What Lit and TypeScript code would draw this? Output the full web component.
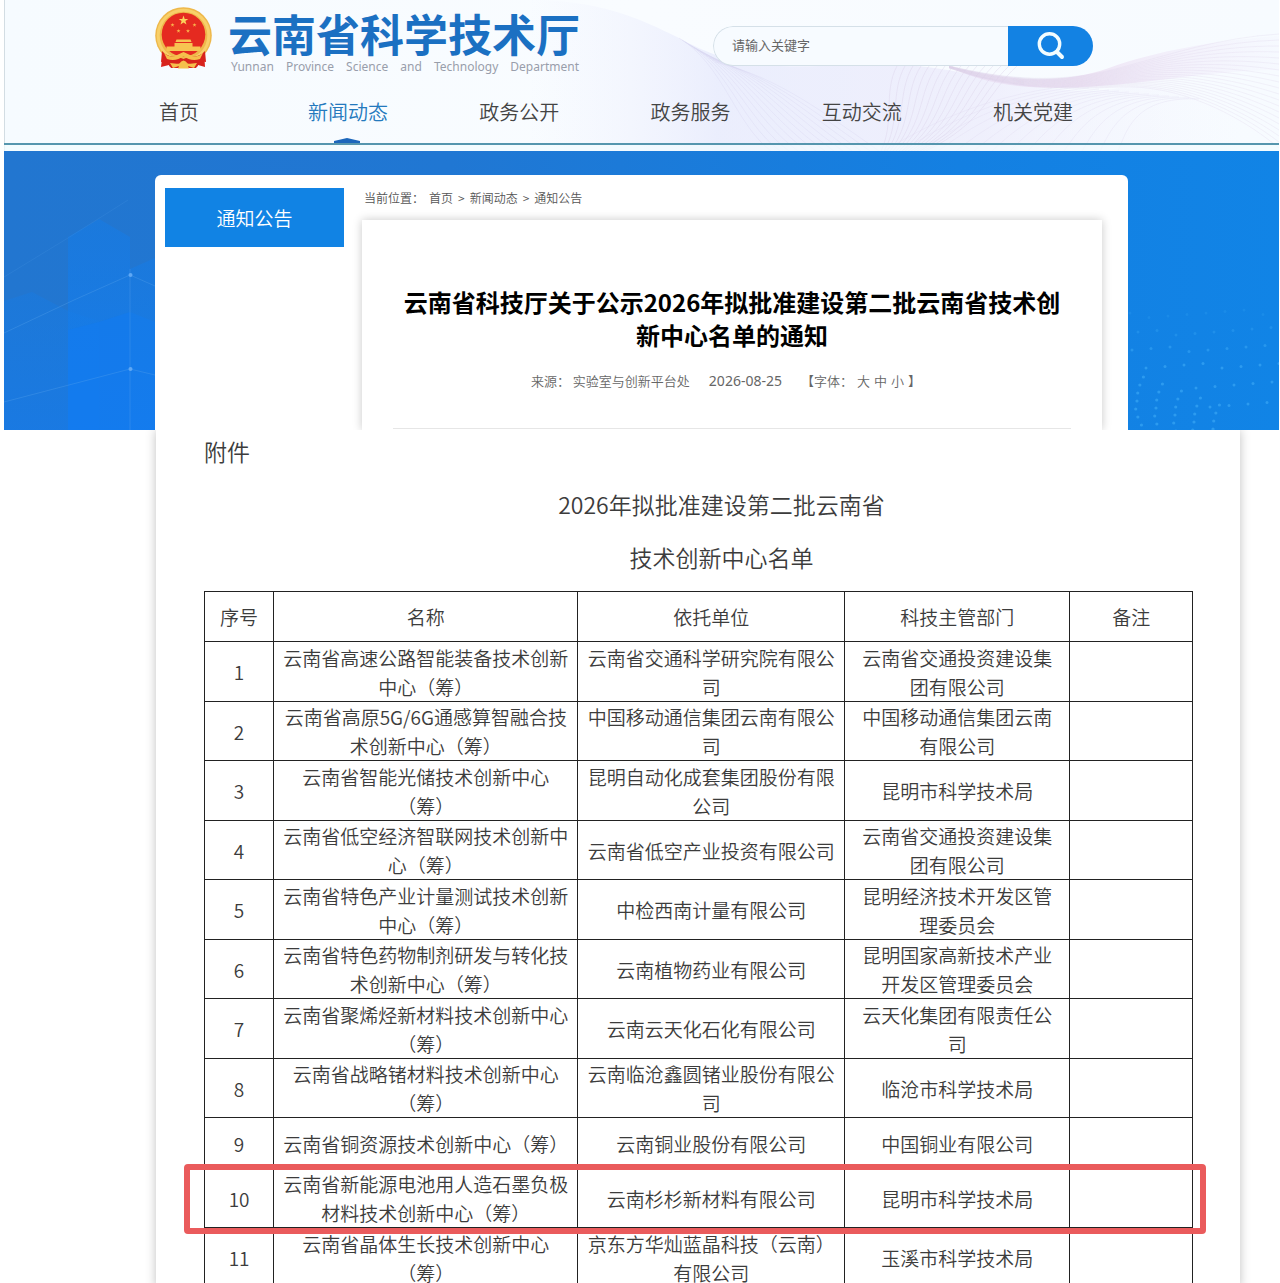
import { LitElement, html, svg, css } from "lit";
import { customElement, state } from "lit/decorators.js";

interface CenterRow {
  name: string;
  host: string;
  dept: string;
  marked?: boolean;
}

const NAV = ["首页", "新闻动态", "政务公开", "政务服务", "互动交流", "机关党建"];

const ROWS: CenterRow[] = [
  { name: "云南省高速公路智能装备技术创新中心（筹）", host: "云南省交通科学研究院有限公司", dept: "云南省交通投资建设集团有限公司" },
  { name: "云南省高原5G/6G通感算智融合技术创新中心（筹）", host: "中国移动通信集团云南有限公司", dept: "中国移动通信集团云南有限公司" },
  { name: "云南省智能光储技术创新中心（筹）", host: "昆明自动化成套集团股份有限公司", dept: "昆明市科学技术局" },
  { name: "云南省低空经济智联网技术创新中心（筹）", host: "云南省低空产业投资有限公司", dept: "云南省交通投资建设集团有限公司" },
  { name: "云南省特色产业计量测试技术创新中心（筹）", host: "中检西南计量有限公司", dept: "昆明经济技术开发区管理委员会" },
  { name: "云南省特色药物制剂研发与转化技术创新中心（筹）", host: "云南植物药业有限公司", dept: "昆明国家高新技术产业开发区管理委员会" },
  { name: "云南省聚烯烃新材料技术创新中心（筹）", host: "云南云天化石化有限公司", dept: "云天化集团有限责任公司" },
  { name: "云南省战略锗材料技术创新中心（筹）", host: "云南临沧鑫圆锗业股份有限公司", dept: "临沧市科学技术局" },
  { name: "云南省铜资源技术创新中心（筹）", host: "云南铜业股份有限公司", dept: "中国铜业有限公司" },
  { name: "云南省新能源电池用人造石墨负极材料技术创新中心（筹）", host: "云南杉杉新材料有限公司", dept: "昆明市科学技术局", marked: true },
  { name: "云南省晶体生长技术创新中心（筹）", host: "京东方华灿蓝晶科技（云南）有限公司", dept: "玉溪市科学技术局" },
];

const range = (n: number) => Array.from({ length: n }, (_, i) => i);

const base = css`
  * {
    box-sizing: border-box;
  }
  a {
    color: inherit;
    text-decoration: none;
  }
`;

@customElement("site-header")
export class SiteHeader extends LitElement {
  @state() private active = 1;

  static styles = [
    base,
    css`
      :host {
        display: block;
        position: relative;
        overflow: hidden;
        background: linear-gradient(90deg, #f6fbff, #f9fcff 50%, #f7fbff);
        box-shadow: inset 1px 0 #d3dde3;
      }
      .waves {
        position: absolute;
        right: 0;
        top: 0;
        width: 600px;
        height: 151px;
        overflow: visible;
      }
      .inner {
        position: relative;
        max-width: 973px;
        margin: 0 auto;
        padding-top: 7px;
      }
      .top {
        display: flex;
        justify-content: space-between;
        align-items: flex-start;
        padding-right: 35px;
      }
      .brand {
        display: flex;
        gap: 16px;
      }
      .emblem {
        width: 57px;
        height: 62px;
      }
      .names {
        display: grid;
        gap: 3px;
        padding-top: 4px;
      }
      .cn {
        margin: 0;
        font-size: 44px;
        line-height: 44px;
        font-weight: 700;
        color: #1b70c2;
      }
      .en {
        display: flex;
        justify-content: space-between;
        padding: 0 1px 0 3px;
        font: 12px/18px "Noto Sans", "Open Sans", sans-serif;
        color: #999eab;
      }
      .search {
        display: flex;
        width: 380px;
        height: 40px;
        margin-top: 19px;
        border-radius: 20px;
        overflow: hidden;
      }
      .field {
        flex: 1;
        min-width: 0;
        border: 1px solid #d5e0e8;
        border-right: 0;
        border-radius: 20px 0 0 20px;
        background: #f7fbff;
        padding: 0 18px 4px;
        font: inherit;
        font-size: 13px;
        color: #555;
        outline: none;
      }
      .field::placeholder {
        color: #666;
        opacity: 1;
      }
      .go {
        width: 85px;
        border: 0;
        padding: 0;
        background: #1382e3;
        display: grid;
        place-items: center;
      }
      .go svg {
        width: 30px;
        height: 30px;
      }
      .nav {
        display: grid;
        grid-template-columns: 149px repeat(4, 1fr) 80px;
        padding: 0 55px 17px 4px;
        margin-top: 22px;
        font-size: 20px;
        line-height: 28px;
        font-weight: 350;
        color: #444;
      }
      .link {
        position: relative;
        justify-self: start;
      }
      .link.on {
        color: #2479bd;
      }
      .link.on::after {
        content: "";
        position: absolute;
        left: 26px;
        bottom: -17px;
        width: 26px;
        height: 5px;
        background: #1b66bb;
        clip-path: polygon(0 60%, 50% 0, 100% 60%, 100% 100%, 0 100%);
      }
      .rule {
        position: relative;
        height: 8px;
        border-top: 2px solid #5596ae;
        background: #f2fcffaa;
      }
    `,
  ];

  private waves() {
    return svg`
      <defs>
        <linearGradient id="lav" x1="0" y1="0" x2="1" y2="0">
          <stop offset="0" stop-color="#eef0fd" stop-opacity="0" />
          <stop offset="0.25" stop-color="#e5e8fc" stop-opacity="0.7" />
          <stop offset="0.6" stop-color="#ebeafb" stop-opacity="0.7" />
          <stop offset="0.95" stop-color="#f3f3fd" stop-opacity="0" />
        </linearGradient>
        <linearGradient id="pink" x1="0" y1="0" x2="1" y2="0">
          <stop offset="0" stop-color="#e6d8f0" stop-opacity="0.5" />
          <stop offset="0.4" stop-color="#ecdff2" stop-opacity="0.8" />
          <stop offset="1" stop-color="#eee8fb" stop-opacity="0.1" />
        </linearGradient>
      </defs>
      <path d="M-150 0 C-80 0 -40 18 0 38 C40 60 70 68 140 66 S230 62 290 74 S400 96 440 88 S560 100 600 150 V151 H-150Z" fill="url(#lav)" />
      <path d="M270 66 C320 80 380 86 430 68 S540 40 600 36 L600 70 C540 70 480 82 420 86 S310 88 270 66Z" fill="url(#pink)" />
      ${range(13).map(
        (i) => svg`<path d="M${i * 3} ${38 + i * 2} C${44 + i * 4} ${64 + i} ${56 + i * 6} ${124 - i * 2} ${92 + i * 9} 151"
          fill="none" stroke="#cfcdea" stroke-width="0.5" opacity="0.5" />`,
      )}
      ${range(16).map(
        (i) => svg`<path d="M${218 + i * 8} 66 C${204 + i * 7} 92 ${216 + i * 6} 122 ${202 + i * 3} 151"
          fill="none" stroke="#d8cde6" stroke-width="0.6" opacity="0.6" />`,
      )}
      ${range(20).map(
        (i) => svg`<path d="M270 ${66 + i * 0.1} C330 ${80 + i * 0.5} 380 ${84 + i * 0.3} 440 ${68 + i}
          S${540 + i} ${38 + i * 4} 600 ${34 + i * 6}"
          fill="none" stroke="#dccfe6" stroke-width="0.5" opacity="0.5" />`,
      )}
      ${range(14).map(
        (i) => svg`<path d="M${205 + i * 18} 151 C${240 + i * 16} 130 ${300 + i * 12} 96 ${390 + i * 10} ${86 + i}"
          fill="none" stroke="#ddd8ee" stroke-width="0.5" opacity="0.6" />`,
      )}
    `;
  }

  private emblem() {
    const star = "M0 -5 L1.2 -1.6 L4.8 -1.6 L1.9 0.6 L3 4 L0 1.9 L-3 4 L-1.9 0.6 L-4.8 -1.6 L-1.2 -1.6Z";
    const small = [
      [17.5, 18],
      [39.5, 18],
      [23.5, 24],
      [33, 24],
    ];
    return svg`
      <path d="M8 44 L6 60 L14 58 L16 61 H41 L43 58 L50 60 L49 44Z" fill="#d8231c" />
      <circle cx="28.5" cy="28.5" r="28.3" fill="#eeb84b" />
      <circle cx="28.5" cy="28.5" r="25.3" fill="none" stroke="#f8d06a" stroke-width="3" />
      <circle cx="28.5" cy="27.5" r="21.8" fill="#e52a20" />
      <path d=${star} transform="translate(28.5 13.5)" fill="#fbd25c" />
      ${small.map(([x, y]) => svg`<path d=${star} transform="translate(${x} ${y}) scale(0.42)" fill="#f9b24b" />`)}
      <path d="M20.5 35 L21.5 32.5 H35.5 L36.5 35Z M19.5 36 H37.5 V39.5 H45.5 V44 H11.5 V39.5 H19.5Z" fill="#f7c451" />
      <path d="M7 44 C14 52 20 48 28.5 52 C37 48 43 52 50 44 L51 55 L45 54 L42 60 L36 56 L21 56 L15 60 L12 54 L6 55Z" fill="#d8231c" />
      <path d="M9 46 Q16 52 22 48 L28.5 45 L35 48 Q41 52 48 46 L45 52 Q36 55 28.5 49 Q21 55 12 52Z" fill="#f5c04c" />
      <path d="M15 56 L24 57 Q28.5 50 33 57 L42 56 L39 61 L33 59 L34 61.5 H23 L24 59 L18 61Z" fill="#f5c04c" />
    `;
  }

  render() {
    return html`
      <svg class="waves" viewBox="0 0 600 151" aria-hidden="true">${this.waves()}</svg>
      <div class="inner">
        <div class="top">
          <div class="brand">
            <svg class="emblem" viewBox="0 0 57 62" aria-hidden="true">${this.emblem()}</svg>
            <div class="names">
              <h1 class="cn">云南省科学技术厅</h1>
              <div class="en">
                ${"Yunnan Province Science and Technology Department".split(" ").map((w) => html`<span>${w}</span>`)}
              </div>
            </div>
          </div>
          <form class="search" @submit=${(e: Event) => e.preventDefault()}>
            <input class="field" type="text" placeholder="请输入关键字" aria-label="请输入关键字" />
            <button class="go" type="submit" aria-label="搜索">
              <svg viewBox="0 0 30 30" fill="none" stroke="#f2fcff" aria-hidden="true">
                <circle cx="13.5" cy="13" r="10.2" stroke-width="3.4" />
                <path d="M21 21 L26 26" stroke-width="4" stroke-linecap="round" />
              </svg>
            </button>
          </form>
        </div>
        <nav class="nav">
          ${NAV.map(
            (t, i) => html`<a class="link ${i === this.active ? "on" : ""}" href="#" @click=${() => (this.active = i)}>${t}</a>`,
          )}
        </nav>
      </div>
      <div class="rule"></div>
    `;
  }
}

@customElement("notice-banner")
export class NoticeBanner extends LitElement {
  static styles = [
    base,
    css`
      :host {
        display: block;
        position: relative;
        overflow: hidden;
        padding-top: 24px;
        background: linear-gradient(90deg, #2276d0, #2077d3 35%, #1480e2 75%, #1184e6);
      }
      .art {
        position: absolute;
        top: 0;
        width: 151px;
        height: 279px;
      }
      .left {
        left: 0;
      }
      .right {
        right: 0;
      }
      .card {
        position: relative;
        display: grid;
        grid-template-columns: 179px minmax(0, 1fr);
        gap: 18px;
        max-width: 973px;
        margin: 0 auto;
        padding: 13px 26px 0 10px;
        background: #fff;
        border-radius: 6px 6px 0 0;
      }
      .tab {
        display: block;
        height: 59px;
        line-height: 59px;
        background: #1183e4;
        color: #fff;
        font-size: 19px;
        font-weight: 350;
        text-align: center;
      }
      .crumbs {
        display: flex;
        gap: 5px;
        padding-left: 2px;
        font-size: 12px;
        line-height: 20px;
        font-weight: 350;
        color: #555;
      }
      .article {
        margin-top: 12px;
        padding: 65px 31px 0;
        background: #fff;
        box-shadow: 0 0 9px rgba(0, 0, 0, 0.22);
        text-align: center;
      }
      .title {
        margin: 0;
        font-size: 24px;
        line-height: 33px;
        font-weight: 700;
        color: #000;
      }
      .meta {
        display: flex;
        justify-content: center;
        gap: 19px;
        margin-top: 20px;
        padding: 0 12px 37px 0;
        border-bottom: 1px solid #e6e6e6;
        font-size: 13px;
        line-height: 20px;
        font-weight: 350;
        color: #666;
      }
      .date {
        font-family: "Noto Sans", sans-serif;
        font-size: 14px;
        font-weight: 400;
      }
      .sizes {
        display: flex;
        gap: 4px;
      }
      .size {
        border: 0;
        padding: 0;
        background: none;
        font: inherit;
        color: inherit;
      }
      .tail {
        height: 1px;
      }
    `,
  ];

  private dots() {
    const rows = [
      { y: 162, x: 2, o: 0.25 },
      { y: 180, x: 10, o: 0.4 },
      { y: 197, x: 4, o: 0.6 },
      { y: 214, x: 18, o: 0.75 },
      { y: 233, x: 68, o: 0.75 },
      { y: 251, x: 82, o: 0.75 },
    ];
    return svg`
      ${rows.map((r, n) =>
        range(9).map(
          (i) => svg`<circle cx=${r.x + i * 19} cy=${r.y + ((i * 5 + n) % 6) - i * 0.5} r="1.5" fill="#35a3f3" opacity=${r.o} />`,
        ),
      )}
      ${range(5).map((c) =>
        range(7).map((i) => {
          const x = 9 + c * 19 + ((i - 3) * (i - 3)) / 1.4 - (i > 3 ? 2 : 0);
          return svg`<circle cx=${x} cy=${226 + c * 7 + i * 8} r="1.6" fill="#35a3f3" opacity="0.75" />`;
        }),
      )}
    `;
  }

  render() {
    return html`
      <svg class="art left" viewBox="0 0 151 279" aria-hidden="true">
        <defs>
          <linearGradient id="hex" x1="0" y1="0" x2="0" y2="1">
            <stop offset="0" stop-color="#167ce6" stop-opacity="0.55" />
            <stop offset="1" stop-color="#137cf0" stop-opacity="0.8" />
          </linearGradient>
        </defs>
        <path d="M64 86 L95 68 L126 86 V279 H64Z" fill="url(#hex)" />
        <path d="M0 150 L28 141 L64 160 L95 170 V279 H0Z" fill="url(#hex)" opacity="0.7" />
        <path d="M64 179 L95 171 L126 161 L151 171 V279 H64Z" fill="#127bf0" opacity="0.65" />
        <path d="M126 118 L151 107 V279 H126Z" fill="url(#hex)" />
        <g fill="none" stroke="#5ba6ee" stroke-width="0.8" opacity="0.4">
          <path d="M0 182 L70 149 L126 124 L151 135" />
          <path d="M0 251 L126 218 L151 224" />
          <path d="M0 126 L64 87 L124 49" opacity="0.5" />
          <path d="M126 118 V279" />
        </g>
        <circle cx="126.5" cy="124" r="2" fill="#5fa8f5" />
        <circle cx="126.5" cy="218" r="2" fill="#5fa8f5" />
      </svg>
      <svg class="art right" viewBox="0 0 151 279" aria-hidden="true">${this.dots()}</svg>
      <div class="card">
        <aside><a class="tab" href="#">通知公告</a></aside>
        <div>
          <nav class="crumbs">
            <span>当前位置：</span><a href="#">首页</a><span>&gt;</span><a href="#">新闻动态</a><span>&gt;</span><a href="#">通知公告</a>
          </nav>
          <article class="article">
            <h2 class="title">云南省科技厅关于公示2026年拟批准建设第二批云南省技术创新中心名单的通知</h2>
            <div class="meta">
              <span>来源： 实验室与创新平台处</span>
              <time class="date">2026-08-25</time>
              <span class="sizes">
                <span>【字体：</span>
                <button class="size" type="button">大</button>
                <button class="size" type="button">中</button>
                <button class="size" type="button">小</button>
                <span>】</span>
              </span>
            </div>
            <div class="tail"></div>
          </article>
        </div>
      </div>
    `;
  }
}

@customElement("center-list")
export class CenterList extends LitElement {
  static styles = [
    base,
    css`
      :host {
        display: block;
        padding: 5px 47px 0 48px;
        background: #fff;
        box-shadow: 0 0 10px rgba(0, 0, 0, 0.25);
        color: #3c3c3c;
      }
      .label,
      .heading {
        margin: 0;
        font-size: 23px;
        font-weight: 350;
      }
      .label {
        line-height: 32px;
        margin-bottom: 11px;
      }
      .heading {
        line-height: 53px;
        text-align: center;
        text-indent: 2em;
      }
      .list {
        width: 100%;
        margin-top: 7px;
        table-layout: fixed;
        border-collapse: collapse;
        font-size: 19px;
        line-height: 29px;
        font-weight: 350;
        text-align: center;
      }
      .no {
        width: 7%;
      }
      .name {
        width: 30.8%;
      }
      .host {
        width: 27%;
      }
      .dept {
        width: 22.8%;
      }
      .note {
        width: 12.4%;
      }
      th,
      td {
        height: 51px;
        padding: 0 8px;
        border: 1px solid #222;
        font-weight: inherit;
      }
      th {
        height: 50px;
      }
      .row:nth-child(odd):not(.single) td {
        height: 60px;
      }
      .marked {
        position: relative;
      }
      .marked td:first-child::after {
        content: "";
        position: absolute;
        inset: -5px -13px -6px -21px;
        border: 6px solid #ea5b5c;
        border-radius: 4px;
        pointer-events: none;
      }
    `,
  ];

  render() {
    return html`
      <p class="label">附件</p>
      <p class="heading">2026年拟批准建设第二批云南省</p>
      <p class="heading">技术创新中心名单</p>
      <table class="list">
        <thead>
          <tr>
            <th class="no" scope="col">序号</th>
            <th class="name" scope="col">名称</th>
            <th class="host" scope="col">依托单位</th>
            <th class="dept" scope="col">科技主管部门</th>
            <th class="note" scope="col">备注</th>
          </tr>
        </thead>
        <tbody>
          ${ROWS.map(
            (r, i) => html`<tr class="row ${r.marked ? "marked" : ""} ${r.name.length < 16 ? "single" : ""}">
              <td>${i + 1}</td>
              <td>${r.name}</td>
              <td>${r.host}</td>
              <td>${r.dept}</td>
              <td></td>
            </tr>`,
          )}
        </tbody>
      </table>
    `;
  }
}

@customElement("app-root")
export class AppRoot extends LitElement {
  static styles = [
    base,
    css`
      :host {
        display: block;
        box-sizing: border-box;
        height: 100vh;
        overflow: hidden;
        padding: 0 1px 0 4px;
        background: #fff;
        font-family: "Noto Sans CJK SC", "Noto Sans", sans-serif;
        text-spacing-trim: space-all;
      }
      .banner {
        position: relative;
        z-index: 1;
      }
      .sheet {
        padding: 0 39px 0 152px;
        overflow: hidden;
      }
    `,
  ];

  render() {
    return html`
      <site-header></site-header>
      <notice-banner class="banner"></notice-banner>
      <main class="sheet"><center-list></center-list></main>
    `;
  }
}
